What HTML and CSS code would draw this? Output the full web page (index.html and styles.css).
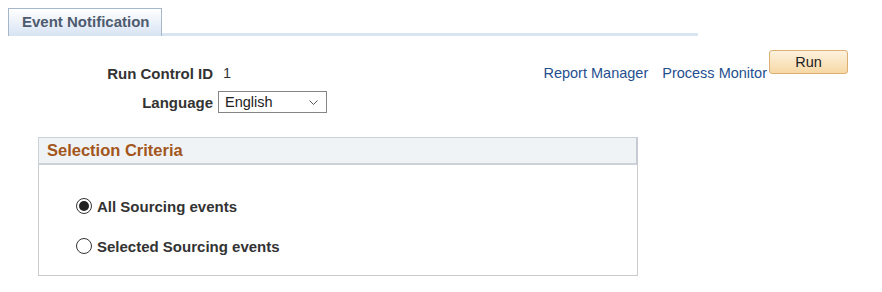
FILE: index.html
```html
<!DOCTYPE html>
<html lang="en">

<head>
    <meta charset="UTF-8">
    <meta name="viewport" content="width=device-width, initial-scale=1.0">
    <title>Event Notification</title>
    <link rel="stylesheet" href="styles.css">
</head>

<body>
    <div class="abas">
        <div class="aba">Event Notification</div>
        <div class="aba-linha"></div>
    </div>

    <div class="linha linha-topo">
        <span class="rotulo">Run Control ID</span>
        <span class="valor">1</span>
        <div class="links">
            <a href="#">Report Manager</a>
            <a href="#">Process Monitor</a>
        </div>
        <button class="botao-run">Run</button>
    </div>

    <div class="linha linha-idioma">
        <span class="rotulo">Language</span>
        <div class="seletor">
            <select>
                <option>English</option>
            </select>
            <svg class="seta" width="9" height="5" viewBox="0 0 9 5">
                <path d="M0.5 0.5 L4.5 4.5 L8.5 0.5" fill="none" stroke="#555" stroke-width="1"/>
            </svg>
        </div>
    </div>

    <div class="criterios">
        <div class="criterios-titulo">Selection Criteria</div>
        <div class="criterios-corpo">
            <label class="opcao">
                <span class="radio marcado"></span>
                All Sourcing events
            </label>
            <label class="opcao">
                <span class="radio"></span>
                Selected Sourcing events
            </label>
        </div>
    </div>
</body>

</html>
```

FILE: styles.css
```css
body {
    margin: 8px;
    background-color: #fff;
    font-family: "Liberation Sans", Arial, sans-serif;
    font-size: 14.5px;
    color: #333;
}

.abas {
    display: flex;
    align-items: flex-end;
    width: 690px;
}

.aba {
    box-sizing: border-box;
    width: 154px;
    height: 28px;
    padding-left: 13px;
    border: 1px solid #a7b7cb;
    border-bottom: none;
    background: linear-gradient(#ffffff, #d7e3f3);
    color: #4e5b6f;
    font-size: 15px;
    font-weight: bold;
    line-height: 26px;
    white-space: nowrap;
}

.aba-linha {
    flex: 1;
    height: 3px;
    background-color: #d9e5f3;
}

.linha {
    display: flex;
    width: 840px;
}

.linha-topo {
    margin-top: 14px;
    align-items: flex-start;
}

.linha-topo .rotulo,
.linha-topo .valor,
.links {
    margin-top: 15px;
    line-height: 17px;
}

.rotulo {
    width: 205px;
    text-align: right;
    font-size: 15px;
    font-weight: bold;
}

.valor {
    margin-left: 10px;
}

.links {
    margin-left: auto;
    display: flex;
    gap: 14px;
    margin-right: 2px;
}

.links a {
    color: #1f4f8f;
    text-decoration: none;
}

.botao-run {
    box-sizing: border-box;
    width: 79px;
    height: 24px;
    padding: 0;
    border: 1px solid #dcae72;
    border-radius: 3px;
    background: linear-gradient(#fdf2de, #f7d8a6);
    font-family: "Liberation Sans", Arial, sans-serif;
    font-size: 14.5px;
    color: #222;
}

.linha-idioma {
    margin-top: 9px;
    align-items: center;
}

.seletor {
    position: relative;
    margin-left: 5px;
}

.seletor select {
    box-sizing: border-box;
    width: 109px;
    height: 22px;
    padding: 0 0 0 6px;
    border: 1px solid #858585;
    border-radius: 0;
    background-color: #fff;
    appearance: none;
    font-family: "Liberation Sans", Arial, sans-serif;
    font-size: 14.5px;
    color: #222;
}

.seta {
    position: absolute;
    right: 9px;
    top: 9px;
}

.criterios {
    box-sizing: border-box;
    width: 600px;
    margin: 24px 0 0 30px;
}

.criterios-titulo {
    box-sizing: border-box;
    height: 28px;
    padding-left: 8px;
    border: 1px solid #cdd1d8;
    border-right: 2px solid #c6cad3;
    border-bottom: 2px solid #cdd1d8;
    background-color: #f0f3f5;
    color: #a3561c;
    font-size: 16.5px;
    font-weight: bold;
    line-height: 25px;
}

.criterios-corpo {
    display: flex;
    flex-direction: column;
    gap: 20px;
    padding: 31px 0 19px 37px;
    border: 1px solid #cbcbcb;
    border-top: none;
}

.opcao {
    display: flex;
    align-items: center;
    gap: 5px;
    height: 20px;
    font-size: 15px;
    font-weight: bold;
    color: #333;
}

.radio {
    box-sizing: border-box;
    width: 16px;
    height: 16px;
    border: 1px solid #333;
    border-radius: 50%;
    background-color: #fff;
    display: flex;
    align-items: center;
    justify-content: center;
}

.radio.marcado::after {
    content: "";
    width: 10px;
    height: 10px;
    border-radius: 50%;
    background-color: #222;
}
```
